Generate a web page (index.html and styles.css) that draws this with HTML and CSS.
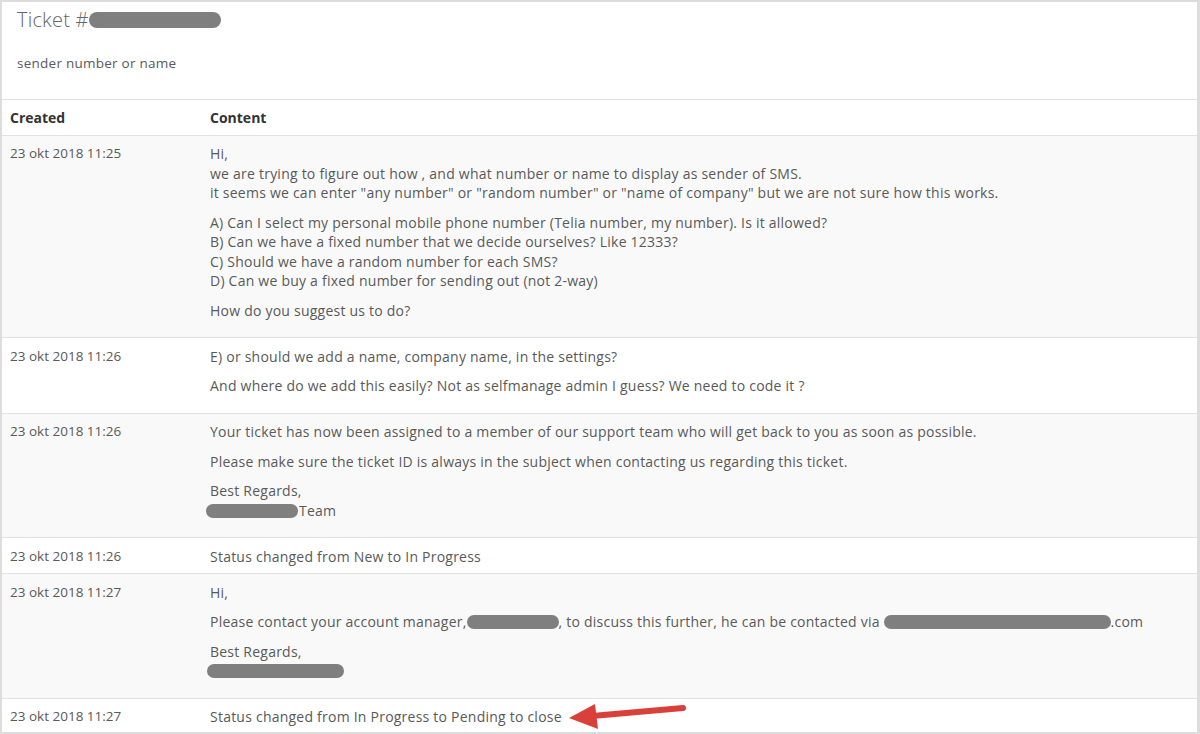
FILE: index.html
```html
<!DOCTYPE html>
<html>
<head>
<meta charset="utf-8">
<link rel="stylesheet" href="styles.css">
</head>
<body>
<div class="frame">
  <header class="ticket-head">
    <h1 class="ticket-title">Ticket #<span class="redact redact-title"></span></h1>
    <p class="ticket-subject">sender number or name</p>
  </header>
  <table class="messages">
    <thead>
      <tr>
        <th class="col-date">Created</th>
        <th class="col-content">Content</th>
      </tr>
    </thead>
    <tbody>
      <tr class="row-alt">
        <td class="cell-date">23 okt 2018 11:25</td>
        <td class="cell-content">
          <p>Hi,<br>we are trying to figure out how , and what number or name to display as sender of SMS.<br>it seems we can enter "any number" or "random number" or "name of company" but we are not sure how this works.</p>
          <p>A) Can I select my personal mobile phone number (Telia number, my number). Is it allowed?<br>B) Can we have a fixed number that we decide ourselves? Like 12333?<br>C) Should we have a random number for each SMS?<br>D) Can we buy a fixed number for sending out (not 2-way)</p>
          <p>How do you suggest us to do?</p>
        </td>
      </tr>
      <tr>
        <td class="cell-date">23 okt 2018 11:26</td>
        <td class="cell-content">
          <p>E) or should we add a name, company name, in the settings?</p>
          <p>And where do we add this easily? Not as selfmanage admin I guess? We need to code it ?</p>
        </td>
      </tr>
      <tr class="row-alt">
        <td class="cell-date">23 okt 2018 11:26</td>
        <td class="cell-content">
          <p>Your ticket has now been assigned to a member of our support team who will get back to you as soon as possible.</p>
          <p>Please make sure the ticket ID is always in the subject when contacting us regarding this ticket.</p>
          <p>Best Regards,<br><span class="redact redact-team"></span>Team</p>
        </td>
      </tr>
      <tr>
        <td class="cell-date">23 okt 2018 11:26</td>
        <td class="cell-content cell-status">Status changed from New to In Progress</td>
      </tr>
      <tr class="row-alt">
        <td class="cell-date">23 okt 2018 11:27</td>
        <td class="cell-content">
          <p>Hi,</p>
          <p>Please contact your account manager,<span class="redact redact-manager"></span>, to discuss this further, he can be contacted via <span class="redact redact-email"></span>.com</p>
          <p>Best Regards,<br><span class="redact redact-name"></span></p>
        </td>
      </tr>
      <tr>
        <td class="cell-date">23 okt 2018 11:27</td>
        <td class="cell-content cell-status">Status changed from In Progress to Pending to close</td>
      </tr>
    </tbody>
  </table>
  <svg class="arrow" width="130" height="38" viewBox="0 0 130 38">
    <line x1="121" y1="10" x2="30" y2="18" stroke="#d9403a" stroke-width="6" stroke-linecap="round"/>
    <polygon points="7,20 33,6 36,31" fill="#d9403a"/>
  </svg>
</div>
</body>
</html>
```
FILE: styles.css
```css
html, body {
  margin: 0;
  padding: 0;
  background: #ffffff;
}

.frame {
  position: relative;
  box-sizing: border-box;
  width: 1200px;
  height: 734px;
  border: 2px solid #dddddd;
  border-right-width: 3px;
  overflow: hidden;
  font-family: "Open Sans", "Liberation Sans", sans-serif;
  font-size: 14px;
  letter-spacing: 0.23px;
  color: #595959;
  background: #ffffff;
}

.ticket-head {
  box-sizing: border-box;
  height: 98px;
  padding: 6px 15px 0;
  border-bottom: 1px solid #e2e2e2;
}

.ticket-title {
  margin: 0;
  font-size: 20px;
  font-weight: 300;
  line-height: 24px;
  letter-spacing: 0.2px;
  color: #666666;
}

.ticket-subject {
  margin: 22px 0 0;
  font-size: 13.5px;
  letter-spacing: 0.25px;
  line-height: 18px;
  color: #595959;
}

.redact {
  display: inline-block;
  background: #7f7f7f;
  border-radius: 8px;
  vertical-align: middle;
}

.redact-title {
  width: 132px;
  height: 16px;
  margin-top: -3px;
}

.redact-team {
  width: 92px;
  height: 14px;
  margin-left: -4px;
  margin-right: 1px;
  margin-top: -2px;
}

.redact-manager {
  width: 92px;
  height: 14px;
  margin-top: -2px;
}

.redact-email {
  width: 227px;
  height: 14px;
  margin-top: -2px;
}

.redact-name {
  width: 137px;
  height: 14px;
  margin-left: -3px;
  margin-top: -2px;
}

.messages {
  width: 100%;
  border-collapse: collapse;
}

.messages th,
.messages td {
  padding: 8.5px 8px 7px;
  text-align: left;
  vertical-align: top;
  line-height: 19.5px;
}

.messages th {
  padding: 7.5px 8px 7.5px;
  font-weight: 700;
  letter-spacing: 0;
  color: #333333;
  border-bottom: 1px solid #e2e2e2;
}

.messages td {
  border-bottom: 1px solid #e2e2e2;
}

.cell-date {
  font-size: 13.5px;
  letter-spacing: 0;
}

.col-date {
  width: 184px;
}

.messages tr.row-alt td {
  background: #f9f9f9;
}

.cell-content p {
  margin: 0 0 10px;
}

.arrow {
  position: absolute;
  left: 560px;
  top: 696px;
}
```
